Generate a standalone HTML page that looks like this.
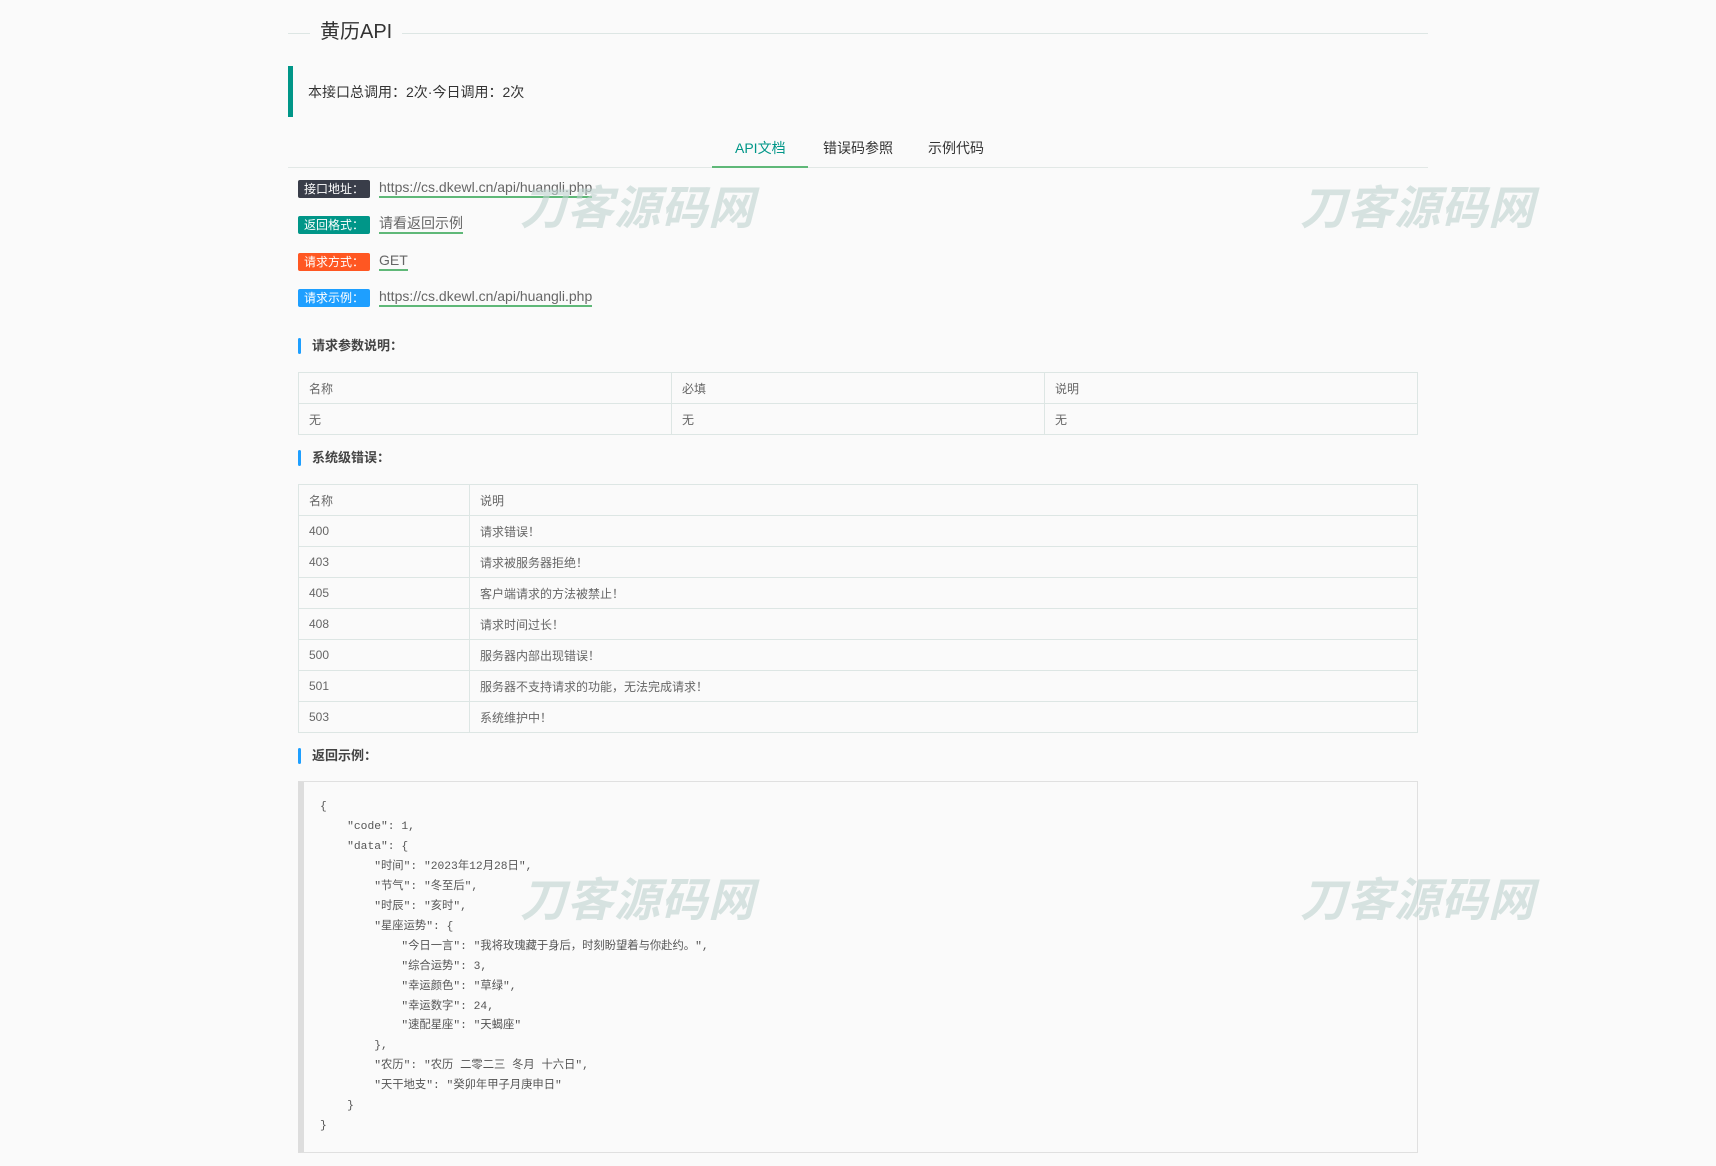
<!DOCTYPE html>
<html><head><meta charset="utf-8"><style>
body{margin:0;background:#fafafa;font-family:"Liberation Sans","Noto Sans CJK SC",sans-serif;color:#333;width:1716px;height:1166px;position:relative;overflow:hidden}
.a{position:absolute}
.title-line{left:288px;top:33px;width:1140px;height:1px;background:#dde6e4}
.title{left:310px;top:19px;padding:0 10px;background:#fafafa;font-size:20px;color:#333;line-height:26px}
.quote{left:288px;top:66px;width:5px;height:51px;background:#009688}
.qt{left:308px;top:83px;font-size:14px;line-height:18px}
.tabline{left:288px;top:167px;width:1140px;height:1px;background:#e2e8e6}
.tabact{left:712px;top:166px;width:96px;height:2px;background:#5FB878}
.tab{top:139px;font-size:14px;line-height:18px}
.lab{left:298px;width:72px;height:18px;color:#fff;font-size:12px;line-height:18px;padding-left:6px;box-sizing:border-box;border-radius:2px}
.lk{left:379px;font-size:14px;color:#666;line-height:17px;border-bottom:2px solid #5FB878}
.h{font-size:13px;font-weight:bold;color:#444;left:312px;line-height:16px}
.hb{left:298px;width:3px;height:16px;background:#1E9FFF;border-radius:2px}
table{position:absolute;left:298px;width:1120px;border-collapse:collapse;font-size:12px;color:#666}
td{border:1px solid #dde6e4;height:31px;padding:0 10px;box-sizing:border-box}
.code{left:298px;top:781px;width:1120px;height:372px;border:1px solid #e0e0e0;border-left:6px solid #ddd;box-sizing:border-box;background:#fafafa}
pre{position:absolute;left:320px;top:798px;margin:0;font-family:"Liberation Mono","Noto Sans CJK SC",monospace;font-size:11.3px;line-height:19.95px;color:#555}
.wm{font-size:46px;font-weight:bold;font-style:italic;color:rgba(190,210,206,.6);letter-spacing:1px;line-height:50px}
</style></head><body>
<div class="a title-line"></div>
<div class="a title">黄历API</div>
<div class="a quote"></div>
<div class="a qt">本接口总调用：2次·今日调用：2次</div>
<div class="a tabline"></div>
<div class="a tabact"></div>
<div class="a tab" style="left:735px;color:#009688">API文档</div>
<div class="a tab" style="left:823px">错误码参照</div>
<div class="a tab" style="left:928px">示例代码</div>

<div class="a lab" style="top:180px;background:#393D49">接口地址：</div>
<div class="a lk" style="top:179px">https://cs.dkewl.cn/api/huangli.php</div>
<div class="a lab" style="top:216px;background:#009688">返回格式：</div>
<div class="a lk" style="top:215px">请看返回示例</div>
<div class="a lab" style="top:253px;background:#FF5722">请求方式：</div>
<div class="a lk" style="top:252px">GET</div>
<div class="a lab" style="top:289px;background:#1E9FFF">请求示例：</div>
<div class="a lk" style="top:288px">https://cs.dkewl.cn/api/huangli.php</div>

<div class="a hb" style="top:338px"></div><div class="a h" style="top:338px">请求参数说明：</div>
<table style="top:372px"><tr><td style="width:373px">名称</td><td style="width:373px">必填</td><td>说明</td></tr><tr><td>无</td><td>无</td><td>无</td></tr></table>

<div class="a hb" style="top:450px"></div><div class="a h" style="top:450px">系统级错误：</div>
<table style="top:484px"><tr><td style="width:171px">名称</td><td>说明</td></tr>
<tr><td>400</td><td>请求错误！</td></tr>
<tr><td>403</td><td>请求被服务器拒绝！</td></tr>
<tr><td>405</td><td>客户端请求的方法被禁止！</td></tr>
<tr><td>408</td><td>请求时间过长！</td></tr>
<tr><td>500</td><td>服务器内部出现错误！</td></tr>
<tr><td>501</td><td>服务器不支持请求的功能，无法完成请求！</td></tr>
<tr><td>503</td><td>系统维护中！</td></tr></table>

<div class="a hb" style="top:748px"></div><div class="a h" style="top:748px">返回示例：</div>
<div class="a code"></div>
<pre>{
    "code": 1,
    "data": {
        "时间": "2023年12月28日",
        "节气": "冬至后",
        "时辰": "亥时",
        "星座运势": {
            "今日一言": "我将玫瑰藏于身后，时刻盼望着与你赴约。",
            "综合运势": 3,
            "幸运颜色": "草绿",
            "幸运数字": 24,
            "速配星座": "天蝎座"
        },
        "农历": "农历 二零二三 冬月 十六日",
        "天干地支": "癸卯年甲子月庚申日"
    }
}</pre>

<div class="a wm" style="left:520px;top:183px">刀客源码网</div>
<div class="a wm" style="left:1300px;top:183px">刀客源码网</div>
<div class="a wm" style="left:520px;top:875px">刀客源码网</div>
<div class="a wm" style="left:1300px;top:875px">刀客源码网</div>
</body></html>
